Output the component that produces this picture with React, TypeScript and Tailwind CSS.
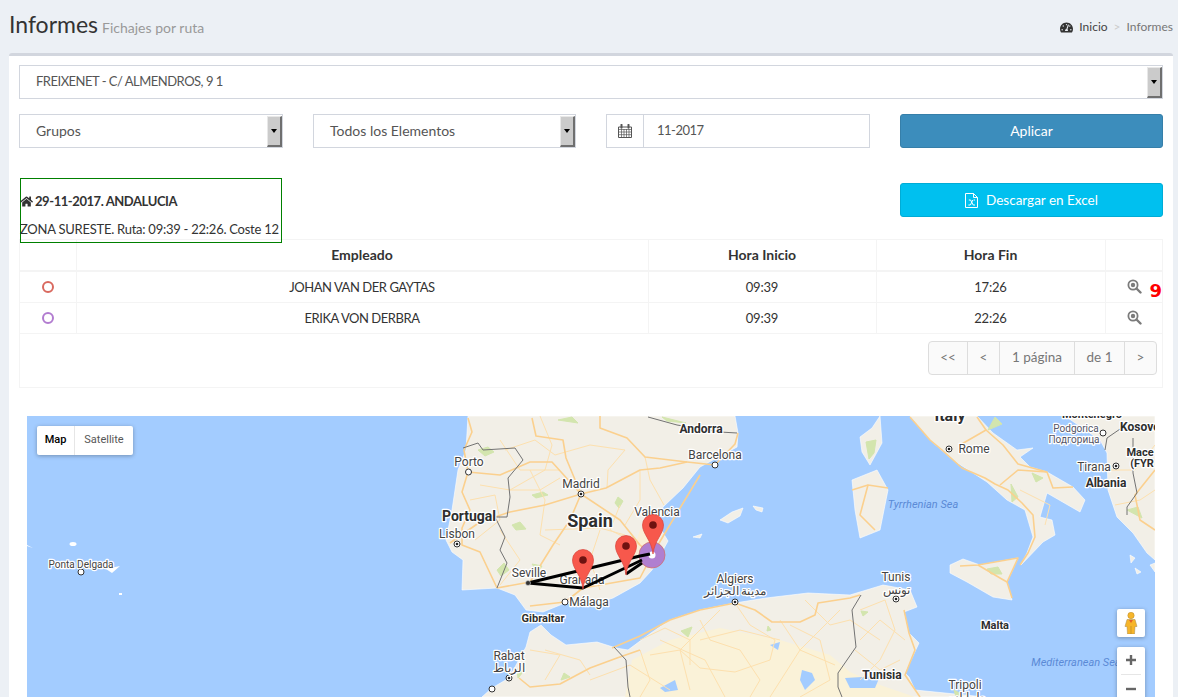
import { FaHome, FaTachometerAlt } from 'react-icons/fa';

const majorRoads = [
  '468,418 472,432 464,450 468,472 462,492 470,510 462,528 462,545 480,552 497,588',
  '468,472 500,475 530,462 552,462 581,494',
  '581,494 566,458 563,440 536,436 532,418',
  '600,416 600,428 627,438 645,457 687,462 715,465 735,444 738,433',
  '581,494 606,488 640,470 660,468 687,462',
  '581,494 570,520 553,545 530,582 497,588',
  '581,494 620,520 640,545 652,555',
  '528,583 583,588 565,602 530,606',
  '583,588 640,578 652,555 668,528 700,475',
  '450,543 480,522 510,512 545,505 581,494',
  '910,417 930,440 942,450 962,468 985,478 995,484 1008,490 1022,503 1033,515 1035,537 1028,553 1020,565',
  '977,417 986,430 960,445',
  '986,430 1003,445 1018,464 1047,472 1053,488 1073,487',
  '1000,485 1018,470 1047,472',
  '852,490 868,485 888,488',
  '868,485 860,515 875,530',
  '960,566 978,565 1018,558 1007,582 1012,598',
  '978,565 1000,578 1007,582',
  '612,648 640,636 670,620 700,610 735,603 755,610 772,622 800,622 815,615 818,603 850,598 860,595',
  '519,678 530,687 560,684 590,668 617,658 640,650',
  '904,610 909,633 915,650 905,675 920,697',
  '1155,470 1135,495 1140,520 1155,530',
];

const minorRoads = [
  '530,470 545,500 540,535 560,545',
  '620,505 610,530 640,545',
  '500,440 520,470 560,470',
  '505,450 535,440 555,455 590,445 625,450',
  '540,416 552,445 545,470 510,490',
  '625,450 608,470 607,488',
  '645,457 650,480 664,505',
  '480,485 510,490 540,490 560,478',
  '470,500 495,495 500,520 475,540',
  '500,530 520,560 500,585',
  '545,530 600,528 625,535',
  '600,530 590,560 600,590',
  '640,470 640,500 625,525',
  '720,610 680,650 690,690',
  '780,620 800,650 835,665',
  '840,610 800,650 770,697',
  '660,640 705,660 725,697',
  '860,640 880,620 905,640',
  '855,650 880,670 900,660',
  '700,640 740,630 780,640',
  '735,603 750,625 775,640 770,660 735,672 700,668 680,650 650,655',
  '590,680 630,665 670,690',
  '545,650 580,660 590,675',
  '640,650 650,680 640,697',
  '700,620 710,640 740,650 760,680 750,697',
  '790,625 820,640 830,680 800,697',
  '805,600 830,625 850,620 880,640',
  '860,610 885,600 895,630 880,660 860,680',
  '640,640 665,628 690,640 690,665',
  '530,650 560,655 545,680',
  '1020,490 1050,505 1045,525',
  '1110,470 1135,470 1155,445',
  '1115,505 1140,500 1155,490',
];

const greenPatches = [
  '478,450 488,447 494,452 485,456',
  '512,525 520,522 526,529 516,530',
  '532,495 543,492 548,495 536,498',
  '618,497 623,501 619,508 615,503',
  '497,570 504,563 509,570 501,576',
  '532,564 542,566 538,572',
  '558,420 572,417 578,423',
  '662,417 686,423 667,421',
  '866,442 876,440 874,453 869,459',
  '995,417 1002,424 988,430',
  '1011,484 1018,497 1012,502',
  '1032,473 1043,478 1036,482',
  '987,569 998,567 1002,574 991,574',
  '1127,510 1138,507 1142,518',
  '681,631 692,627 688,637',
  '517,669 523,672 518,678',
  '564,673 570,677 561,680',
  '768,626 771,630 767,631',
  '861,611 868,612 863,616',
  '954,690 963,695 956,697',
];

const cityLabels: [string, number, number][] = [
  ['Barcelona', 715, 459],
  ['Madrid', 581, 488],
  ['Porto', 469, 466],
  ['Lisbon', 457, 538],
  ['Valencia', 657, 516],
  ['Seville', 529, 577],
  ['Granada', 582, 584],
  ['Málaga', 589, 606],
  ['Rome', 974, 453],
  ['Tirana', 1094, 471],
  ['Algiers', 735, 583],
  ['مدينة الجزائر', 735, 595],
  ['Tunis', 896, 581],
  ['تونس', 896, 594],
  ['Rabat', 509, 660],
  ['الرباط', 509, 672],
  ['Tripoli', 965, 689],
  ['طرابلس', 965, 701],
];

const boldLabels: [string, number, number, string][] = [
  ['Andorra', 701, 433, 'text-[12px]'],
  ['Portugal', 469, 521, 'text-[14px]'],
  ['Spain', 590, 527, 'text-[18px]'],
  ['Gibraltar', 543, 622, 'text-[11px]'],
  ['Italy', 950, 421, 'text-[16px]'],
  ['Albania', 1106, 487, 'text-[12px]'],
  ['Malta', 995, 629, 'text-[11px]'],
  ['Tunisia', 882, 679, 'text-[12px]'],
  ['Montenegro', 1092, 418, 'text-[11px]'],
  ['Kosovo', 1140, 431, 'text-[12px]'],
  ['Mace', 1140, 456, 'text-[11px]'],
  ['(FYR', 1142, 467, 'text-[11px]'],
];

const markers: [number, number, boolean][] = [
  [468.5, 472, false],
  [715, 465, false],
  [581, 494, true],
  [457, 544, true],
  [565, 602, false],
  [949, 449, true],
  [1116, 466, true],
  [1103, 433, false],
  [735, 602, true],
  [896, 599, true],
  [509, 678, true],
  [492, 689, false],
  [81, 572, false],
];

function Pin({ x, y }: { x: number; y: number }) {
  // x, y = tip of the pin
  return (
    <g transform={`translate(${x} ${y})`}>
      <path
        d="M0 0C-1.5-14-10.5-20-10.5-29A10.5 10.5 0 0 1 10.5-29C10.5-20 1.5-14 0 0Z"
        fill="#f7584c"
        stroke="#d8433a"
        strokeWidth="0.7"
      />
      <circle cx="0" cy="-29" r="3.8" fill="#6e1210" />
    </g>
  );
}

function MapDrawing() {
  return (
    <svg width="1128" height="281" viewBox="27 416 1128 281" className="block">
      <rect x="27" y="416" width="1128" height="281" fill="#a3ccff" />

      {/* land */}
      <g fill="#f2efe7" stroke="#fff" strokeWidth="0.6" strokeLinejoin="round">
        <polygon points="468,416 466,450 458,470 452,510 446,540 452,552 463,560 462,590 497,588 515,595 526,610 543,612 565,603 590,605 613,598 640,583 652,570 668,541 657,523 663,507 683,488 700,467 737,447 738,433 735,416" />
        <polygon points="910,416 930,440 953,460 987,482 1007,500 1025,510 1033,537 1027,553 1021,565 1043,542 1055,535 1052,520 1040,517 1047,493 1080,512 1085,500 1073,487 1047,472 1030,467 1020,457 1033,448 1017,450 993,433 977,416" />
        <polygon points="860,437 872,428 880,416 882,443 870,465 862,452" />
        <polygon points="852,480 877,470 888,490 880,530 860,538 855,510" />
        <polygon points="950,565 963,559 980,565 1018,558 1007,582 1012,600 993,597 967,582 950,573" />
        <polygon points="1065,416 1100,440 1107,453 1108,490 1117,517 1133,533 1147,553 1155,560 1155,416" />
        <polygon points="720,520 732,512 743,508 740,516 728,523" />
        <polygon points="753,506 763,508 762,512 756,510" />
        <polygon points="693,537 702,534 700,538" />
        <polygon points="1130,555 1135,558 1131,563" />
        <polygon points="1135,568 1141,572 1137,574" />
        <polygon points="1150,565 1155,563 1155,572" />
        <polygon points="482,697 492,688 509,678 526,647 530,632 541,625 551,635 566,645 597,642 616,648 628,650 651,633 670,620 700,610 735,603 766,598 808,593 850,595 883,585 910,590 917,607 904,612 909,633 919,643 911,660 905,673 909,677 915,690 985,697" />
      </g>
      <g fill="#fff">
        <ellipse cx="73" cy="544" rx="3.5" ry="2" />
        <polygon points="106,569 120,566 112,573" />
        <rect x="119" y="593" width="3" height="2" />
        <polygon points="27,545 33,548 27,546" />
      </g>

      {/* sahara */}
      <polygon points="625,697 632,660 670,640 720,628 780,640 830,655 850,672 880,685 915,697" fill="#faf2d8" />
      <polygon points="640,530 660,515 655,545 630,560" fill="#faefd6" />

      <g fill="#d3e5ae" stroke="#d3e5ae" strokeWidth="1" strokeLinejoin="round">
        {greenPatches.map(points => (
          <polygon key={points} points={points} />
        ))}
      </g>
      <g fill="#a3ccff">
        <polygon points="802,670 812,673 815,680 805,690 800,680" />
        <polygon points="660,688 675,680 678,690 665,692" />
        <polygon points="770,645 780,642 778,650" />
        <polygon points="845,678 880,676 875,688 850,688" />
      </g>

      {/* roads */}
      <g fill="none" stroke="#fde0ae" strokeWidth="1" strokeLinejoin="round">
        {minorRoads.map(points => (
          <polyline key={points} points={points} />
        ))}
      </g>
      <g fill="none" stroke="#fbd08e" strokeWidth="1.6" strokeLinejoin="round">
        {majorRoads.map(points => (
          <polyline key={points} points={points} />
        ))}
      </g>

      {/* borders */}
      <g fill="none" stroke="#737373" strokeWidth="1" strokeLinejoin="round">
        <polyline points="463,448 478,443 483,450 515,448 523,460 508,478 510,497 507,517 495,517 505,537 500,550 507,563 497,588" />
        <polyline points="648,417 677,425 720,432 737,433" />
        <polyline points="614,647 626,660 628,687 630,697" />
        <polyline points="861,595 852,610 856,647 838,673 838,687 842,697" />
        <polyline points="1123,427 1107,438 1105,450" />
        <polyline points="1133,438 1133,473 1137,493 1127,507 1127,515" />
      </g>

      {/* city dots */}
      {markers.map(([x, y, filled]) => (
        <g key={`${x}-${y}`}>
          <circle cx={x} cy={y} r="3" fill="#fff" stroke="#333" strokeWidth="1" />
          {filled && <circle cx={x} cy={y} r="1.3" fill="#222" />}
        </g>
      ))}

      {/* labels */}
      <g textAnchor="middle" stroke="#fff" strokeWidth="2.5" strokeLinejoin="round" className="[paint-order:stroke] [font-family:Roboto,sans-serif]">
        <g fill="#444" className="text-[12px]">
          {cityLabels.map(([label, x, y]) => (
            <text key={label} x={x} y={y}>{label}</text>
          ))}
          <text x="81" y="568" className="text-[10px]">Ponta Delgada</text>
          <text x="1076" y="432" className="text-[10px]" fill="#556">Podgorica</text>
          <text x="1074" y="443" className="text-[10px]" fill="#556">Подгорица</text>
        </g>
        <g fill="#2e2e2e" className="font-bold">
          {boldLabels.map(([label, x, y, size]) => (
            <text key={label} x={x} y={y} className={size}>{label}</text>
          ))}
        </g>
      </g>
      <g textAnchor="middle" fill="#5b8ad6" className="text-[11px] italic [font-family:Roboto,sans-serif]">
        <text x="923" y="508">Tyrrhenian Sea</text>
        <text x="1076" y="666">Mediterranean Sea</text>
      </g>

      {/* route */}
      <circle cx="652" cy="555" r="13" fill="#b07fd0" stroke="#cf6f70" strokeWidth="0.8" />
      <circle cx="652" cy="555" r="3.5" fill="#fff" />
      <g fill="none" stroke="#000" strokeWidth="3" strokeLinejoin="round">
        <polyline points="528,583 640,556 650,554" />
        <polyline points="528,583 583,588 642,560" />
        <polyline points="626,574 642,563" />
      </g>
      <circle cx="528" cy="583" r="2.5" fill="#333" stroke="#ddd" strokeWidth="0.6" />
      <Pin x={583} y={589} />
      <Pin x={626} y={575} />
      <Pin x={653} y={554} />
    </svg>
  );
}

function SelectBox({ label, className, labelClass }: { label: string; className: string; labelClass?: string }) {
  return (
    <div className={`flex h-[34px] justify-between border border-[#d2d6de] bg-white pl-4 text-[#555] ${className}`}>
      <span className={`self-center ${labelClass ?? 'pb-[2px]'}`}>{label}</span>
      <div className="flex h-[31px] w-[15px] items-center justify-center self-end border-t border-l border-t-[#e8e8e8] border-l-[#e8e8e8] border-r-2 border-b-2 border-r-[#6f6f6f] border-b-[#6f6f6f] bg-[#cbcbcb]">
        <div className="h-0 w-0 border-x-[3.5px] border-t-[4px] border-x-transparent border-t-black" />
      </div>
    </div>
  );
}

function ZoomIcon() {
  return (
    <svg width="15" height="15" viewBox="0 0 15 15" className="shrink-0 text-[#7b7b7b]">
      <circle cx="6" cy="6" r="4.6" fill="none" stroke="currentColor" strokeWidth="1.8" />
      <circle cx="6" cy="6" r="2.2" fill="currentColor" />
      <path d="M9.5 9.5L13.5 13.5" stroke="currentColor" strokeWidth="2.4" strokeLinecap="round" />
    </svg>
  );
}

function CalendarIcon() {
  return (
    <svg width="14" height="14" viewBox="0 0 14 14" className="text-[#555]">
      <path d="M.5 3h13v10.5H.5z" fill="none" stroke="currentColor" />
      <path d="M.5 5.5h13M.5 8h13M.5 10.7h13M3.5 5v8.5M6 5v8.5M8.5 5v8.5M11 5v8.5" stroke="currentColor" strokeWidth="0.7" />
      <path d="M3.5 .8v3M10.5 .8v3" stroke="currentColor" strokeWidth="2" strokeLinecap="round" />
    </svg>
  );
}

function ExcelIcon() {
  return (
    <svg width="13" height="15" viewBox="0 0 13 15" className="text-white">
      <path d="M.5.5H8.5L12.5 4.5V14.5H.5Z M8.5.5V4.5H12.5" fill="none" stroke="currentColor" />
      <path d="M3.8 7H5.6L8.2 12H10M8.6 7H10M3.4 12H5.2M5.4 12L7.8 7" fill="none" stroke="currentColor" strokeWidth="1" />
    </svg>
  );
}

const rows = [
  { color: 'border-[#d9695f]', name: 'JOHAN VAN DER GAYTAS', start: '09:39', end: '17:26', count: '9' },
  { color: 'border-[#b27cd0]', name: 'ERIKA VON DERBRA', start: '09:39', end: '22:26', count: '' },
];

const pages = [
  { label: '<<', width: 'w-[38px]' },
  { label: '<', width: 'w-[32px]' },
  { label: '1 página', width: 'w-[75px]' },
  { label: 'de 1', width: 'w-[50px]' },
  { label: '>', width: 'w-[32px]' },
];

export default function App() {
  return (
    <div className="h-[697px] overflow-hidden bg-[#ecf0f5] pl-[9px] pr-[5px] text-[14px] text-[#333] [font-family:Lato,sans-serif]">
      {/* Header */}
      <div className="flex h-[53px] items-start justify-between">
        <h1 className="mt-[9px] flex items-baseline gap-[4px] text-[23px] leading-[30px]">
          Informes
          <small className="text-[14px] text-[#999]">Fichajes por ruta</small>
        </h1>
        <div className="mt-[20px] flex items-center text-[12px] leading-[14px] text-[#777]">
          <FaTachometerAlt className="mr-[6px] text-[13px] text-[#333]" />
          <span className="text-[#444]">Inicio</span>
          <span className="mx-[6px] text-[#ccc]">&gt;</span>
          <span>Informes</span>
        </div>
      </div>

      {/* Box */}
      <div className="h-[644px] rounded-t-[3px] border-t-[3px] border-[#d2d6de] bg-white px-[10px] pt-[9px]">
        <SelectBox
          label="FREIXENET - C/ ALMENDROS, 9 1"
          className="w-full"
          labelClass="text-[13px] tracking-[-0.5px]"
        />

        <div className="mt-[15px] flex">
          <SelectBox label="Grupos" className="w-[264px]" />
          <SelectBox label="Todos los Elementos" className="ml-[30px] w-[263px]" />
          <div className="ml-[30px] flex h-[34px] w-[264px] border border-[#d2d6de] text-[#555]">
            <div className="flex w-[37px] items-center justify-center border-r border-[#d2d6de]">
              <CalendarIcon />
            </div>
            <div className="flex items-center pl-[13px] text-[13px] tracking-[-0.5px]">11-2017</div>
          </div>
          <button className="ml-[30px] h-[34px] w-[263px] rounded-[3px] border border-[#367fa9] bg-[#3c8dbc] pb-[2px] text-white">
            Aplicar
          </button>
        </div>

        <div className="relative z-10 mt-[30px] flex h-[61px] items-start justify-between">
          <div className="ml-px h-[65px] w-[262px] border border-[#008000] pt-[14px] leading-[16px]">
            <div className="flex items-center gap-[2px] text-[13px] font-bold tracking-[-0.43px]">
              <FaHome className="-ml-px text-[13px]" />
              29-11-2017. ANDALUCIA
            </div>
            <div className="mt-[12px] -ml-px text-[13px] tracking-[-0.25px] whitespace-nowrap">
              ZONA SURESTE. Ruta: 09:39 - 22:26. Coste 12
            </div>
          </div>
          <button className="mt-[5px] flex h-[34px] w-[263px] items-center justify-center gap-[8px] rounded-[3px] border border-[#00acd6] bg-[#00c0ef] text-[13.5px] text-white">
            <ExcelIcon />
            Descargar en Excel
          </button>
        </div>

        {/* Table */}
        <div className="border border-[#f4f4f4]">
          <table className="w-full table-fixed border-collapse text-center">
            <colgroup>
              <col className="w-[56px]" />
              <col className="w-[572px]" />
              <col className="w-[228px]" />
              <col className="w-[229px]" />
              <col />
            </colgroup>
            <thead>
              <tr className="h-[31px] border-b-2 border-[#f4f4f4]">
                <th className="border-r border-[#f4f4f4]" />
                <th className="border-r border-[#f4f4f4] pb-[1px] font-bold">Empleado</th>
                <th className="border-r border-[#f4f4f4] pb-[1px] font-bold">Hora Inicio</th>
                <th className="border-r border-[#f4f4f4] pb-[1px] font-bold">Hora Fin</th>
                <th />
              </tr>
            </thead>
            <tbody className="text-[13px]">
              {rows.map(row => (
                <tr key={row.name} className="h-[31px] border-b border-[#f4f4f4]">
                  <td className="border-r border-[#f4f4f4]">
                    <div className={`mx-auto h-[12px] w-[12px] rounded-full border-2 ${row.color}`} />
                  </td>
                  <td className="border-r border-[#f4f4f4] pt-[2px] tracking-[-0.45px]">{row.name}</td>
                  <td className="border-r border-[#f4f4f4] pt-[2px] tracking-[-0.2px]">{row.start}</td>
                  <td className="border-r border-[#f4f4f4] pt-[2px] tracking-[-0.2px]">{row.end}</td>
                  <td>
                    <div className="flex items-center pl-[21px]">
                      <ZoomIcon />
                      {row.count && (
                        <span className="ml-[8px] -mb-[9px] text-[18px] leading-[20px] font-bold text-[#ff0000] [font-family:'DejaVu_Sans',sans-serif]">
                          {row.count}
                        </span>
                      )}
                    </div>
                  </td>
                </tr>
              ))}
            </tbody>
          </table>
          <div className="flex h-[53px] justify-end pt-[7px] pr-[5px]">
            <div className="flex h-[34px] overflow-hidden rounded-[4px] border border-[#ddd] bg-[#fafafa] text-[13.5px] text-[#777]">
              {pages.map((page, i) => (
                <div
                  key={page.label}
                  className={`flex items-center justify-center ${page.width} ${i > 0 ? 'border-l border-[#ddd]' : ''}`}
                >
                  {page.label}
                </div>
              ))}
            </div>
          </div>
        </div>

        {/* Map */}
        <div className="relative mx-[8px] mt-[28px] h-[281px] overflow-hidden">
          <MapDrawing />
          <div className="absolute top-[10px] left-[10px] flex h-[29px] rounded-[2px] bg-white text-[11px] shadow-[0_1px_4px_rgba(0,0,0,0.3)] [font-family:Roboto,sans-serif]">
            <div className="flex w-[38px] items-center justify-center border-r border-[#e6e6e6] font-medium text-black">Map</div>
            <div className="flex w-[58px] items-center justify-center text-[#565656]">Satellite</div>
          </div>
          <div className="absolute top-[193px] left-[1090px] flex h-[28px] w-[28px] items-center justify-center rounded-[2px] bg-white shadow-[0_1px_4px_rgba(0,0,0,0.3)]">
            <svg width="14" height="22" viewBox="0 0 14 22">
              <circle cx="7" cy="3.5" r="3.2" fill="#f6b52a" stroke="#b98a2a" strokeWidth="0.5" />
              <path d="M3 7.5H11L13 14.5H11L10.5 22H3.5L3 14.5H1Z" fill="#f6b52a" stroke="#a88a4a" strokeWidth="0.5" />
              <path d="M7 14V22" stroke="#b98a2a" strokeWidth="0.7" />
              <path d="M5 8L7 11L9 8Z" fill="#e2602a" />
            </svg>
          </div>
          <div className="absolute top-[231px] left-[1090px] h-[56px] w-[28px] rounded-[2px] bg-white shadow-[0_1px_4px_rgba(0,0,0,0.3)]">
            <div className="flex h-[27px] items-center justify-center">
              <svg width="12" height="12" viewBox="0 0 12 12">
                <path d="M1 6H11M6 1V11" stroke="#666" strokeWidth="2.4" />
              </svg>
            </div>
            <div className="mx-[4px] h-px bg-[#e6e6e6]" />
            <div className="flex h-[28px] items-center justify-center">
              <svg width="12" height="12" viewBox="0 0 12 12">
                <path d="M1 6H11" stroke="#666" strokeWidth="2.4" />
              </svg>
            </div>
          </div>
        </div>
      </div>
    </div>
  );
}
